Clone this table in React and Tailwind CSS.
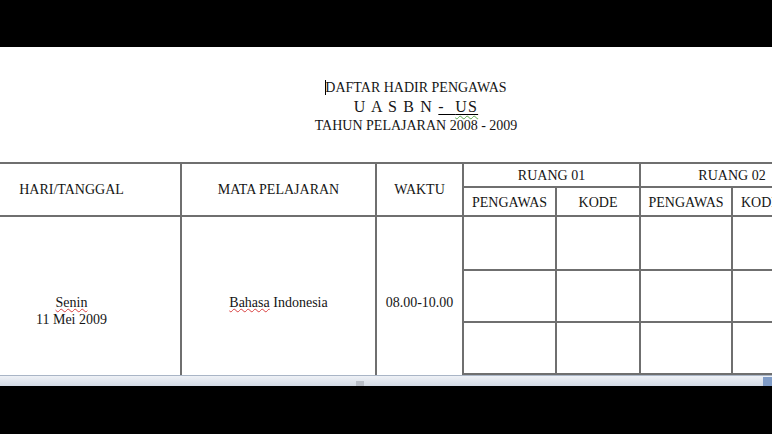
const cell = "border-2 border-[#6f6f6f] text-center align-middle p-0";

const rooms = ["RUANG 01", "RUANG 02"];

const squiggle = "underline decoration-wavy decoration-[#d84040] underline-offset-[1px] decoration-1";

const App = () => {
    return (
        <div className="w-[772px] h-[434px] bg-black overflow-hidden font-[family-name:'Liberation_Serif',serif] text-[#151515]">
            <div className="h-[47px] bg-black" />
            <div className="h-[328px] bg-white overflow-hidden">
                <div className="pl-[60px] pt-[32px] text-center">
                    <div className="text-[14px] leading-[18px]">
                        <span className="inline-block w-px h-[15px] bg-black align-[-3px] -mr-px" />
                        DAFTAR HADIR PENGAWAS
                    </div>
                    <div className="text-[16px] leading-[19px] whitespace-pre tracking-[1.2px]">
                        {"U A S B N "}
                        <span className="underline decoration-black underline-offset-2">
                            {"-  "}
                            <span className="underline decoration-wavy decoration-[#5aa64a] underline-offset-[3px] decoration-1">US</span>
                        </span>
                    </div>
                    <div className="text-[14px] leading-[19px]">TAHUN PELAJARAN 2008 - 2009</div>
                </div>
                <table className="mt-[27px] -ml-[39px] table-fixed border-collapse text-[14px] w-[862px]">
                    <colgroup>
                        <col className="w-[219px]" />
                        <col className="w-[195px]" />
                        <col className="w-[87px]" />
                        <col className="w-[93px]" />
                        <col className="w-[84px]" />
                        <col className="w-[92px]" />
                        <col className="w-[92px]" />
                    </colgroup>
                    <tbody>
                        <tr className="h-[24px]">
                            <td rowSpan={2} className={cell}>HARI/TANGGAL</td>
                            <td rowSpan={2} className={cell}>MATA PELAJARAN</td>
                            <td rowSpan={2} className={cell}>WAKTU</td>
                            {rooms.map((r) => (
                                <td key={r} colSpan={2} className={cell}>{r}</td>
                            ))}
                        </tr>
                        <tr className="h-[29px]">
                            <td className={cell + " pt-[2px]"}>PENGAWAS</td>
                            <td className={cell + " pt-[2px]"}>KODE</td>
                            <td className={cell + " pt-[2px]"}>PENGAWAS</td>
                            <td className={cell + " pt-[2px] text-left pl-[8px]"}>KODE</td>
                        </tr>
                        <tr className="h-[54px]">
                            <td rowSpan={4} className={cell + " align-top pt-[77px] leading-[17px]"}>
                                <div>
                                    <span className={squiggle}>Senin</span>
                                </div>
                                <div>11 Mei 2009</div>
                            </td>
                            <td rowSpan={4} className={cell + " align-top pt-[77px] leading-[17px]"}>
                                <span className={squiggle}>Bahasa</span> Indonesia
                            </td>
                            <td rowSpan={4} className={cell + " align-top pt-[77px] leading-[17px]"}>08.00-10.00</td>
                            <td className={cell} />
                            <td className={cell} />
                            <td className={cell} />
                            <td className={cell} />
                        </tr>
                        {[0, 1, 2].map((i) => (
                            <tr key={i} className="h-[52px]">
                                <td className={cell} />
                                <td className={cell} />
                                <td className={cell} />
                                <td className={cell} />
                            </tr>
                        ))}
                    </tbody>
                </table>
            </div>
            <div className="relative h-[11px] border-t border-[#a9b5c6] bg-gradient-to-b from-[#eef1f6] to-[#d3dae5]">
                <div className="absolute left-[356px] top-[5px] w-[8px] h-[5px] bg-[#b9bec7]" />
                <div className="absolute right-0 top-[1px] w-[9px] h-[9px] bg-[#7f9bc6]" />
            </div>
            <div className="h-[48px] bg-black" />
        </div>
    );
};

export default App;
